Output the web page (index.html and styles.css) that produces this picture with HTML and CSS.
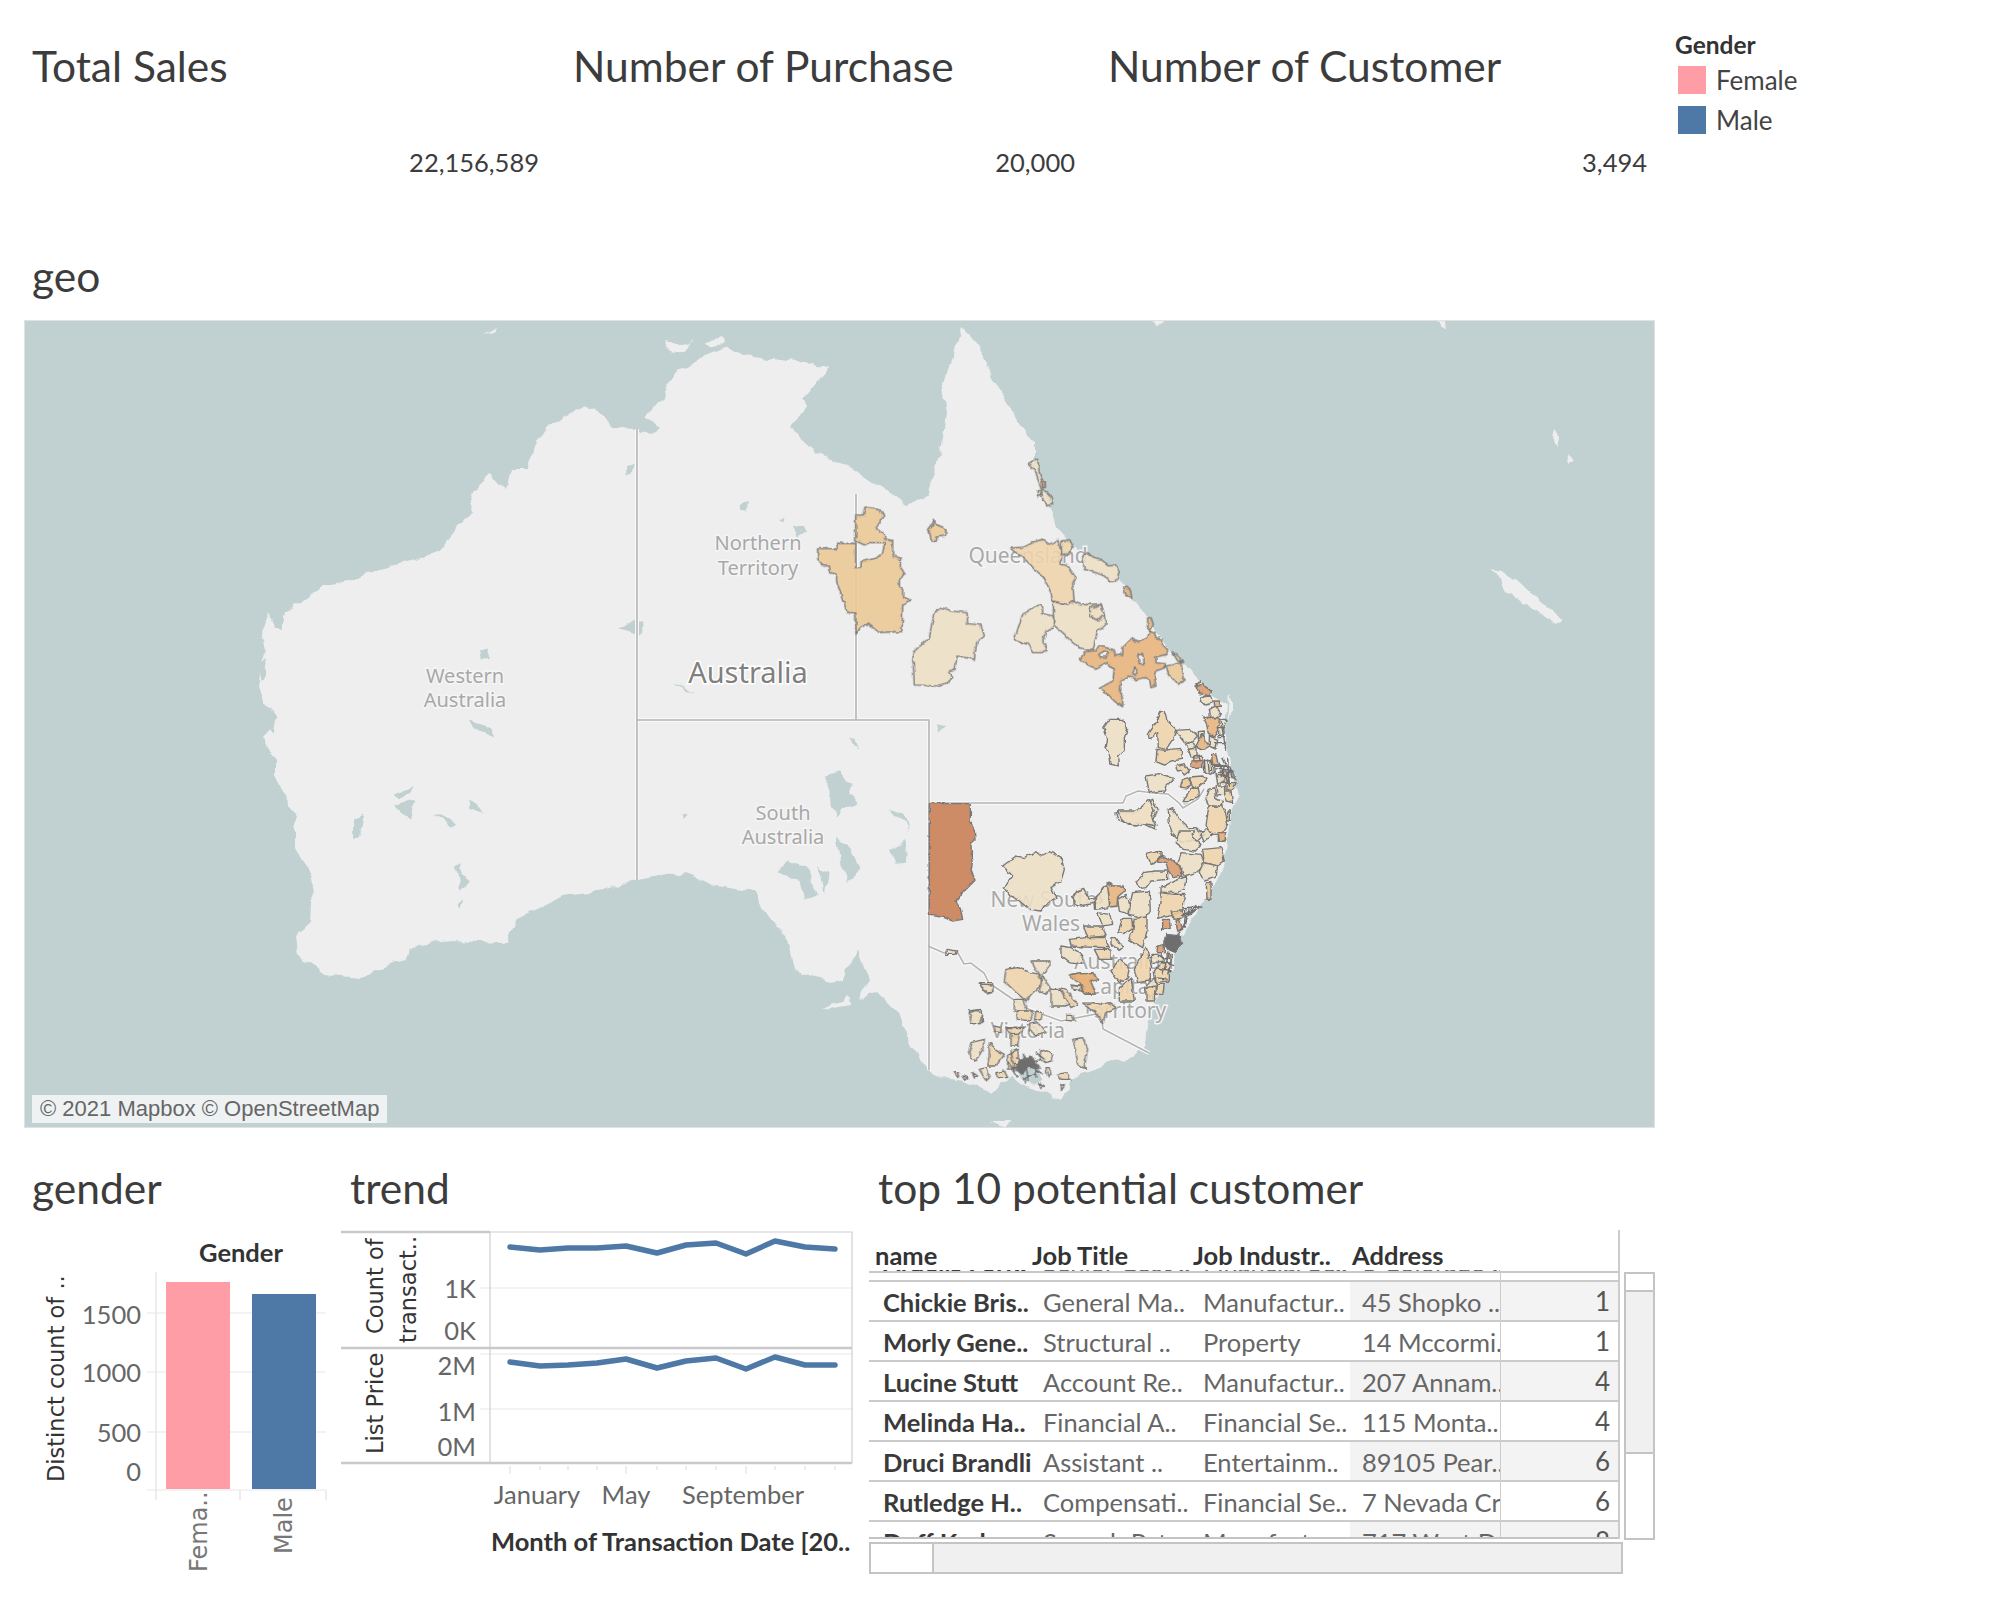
FILE: index.html
```html
<!DOCTYPE html>
<html lang="en">
<head>
<meta charset="utf-8">
<title>Customer dashboard</title>
<link rel="stylesheet" href="styles.css">
</head>
<body>
<main class="dash">
  <section class="kpis">
    <div class="kpi kpi-a"><h2 class="title">Total Sales</h2><div class="kpi-val">22,156,589</div></div>
    <div class="kpi kpi-b"><h2 class="title">Number of Purchase</h2><div class="kpi-val">20,000</div></div>
    <div class="kpi kpi-c"><h2 class="title">Number of Customer</h2><div class="kpi-val">3,494</div></div>
    <aside class="legend">
      <div class="legend-h">Gender</div>
      <div class="legend-i"><span class="sw sw-f"></span>Female</div>
      <div class="legend-i"><span class="sw sw-m"></span>Male</div>
    </aside>
  </section>

  <section class="geo">
    <h2 class="title geo-title">geo</h2>
    <div class="map">
      <svg class="map-svg" viewBox="24 320 1629 806" preserveAspectRatio="none" role="img" aria-label="Map of Australia">
        <defs>
          <filter id="roughLand" x="-5%" y="-5%" width="110%" height="110%">
            <feTurbulence type="fractalNoise" baseFrequency="0.07" numOctaves="2" seed="4"/>
            <feDisplacementMap in="SourceGraphic" scale="9" xChannelSelector="R" yChannelSelector="G"/>
          </filter>
          <filter id="roughReg" x="-5%" y="-5%" width="110%" height="110%">
            <feTurbulence type="fractalNoise" baseFrequency="0.16" numOctaves="2" seed="9"/>
            <feDisplacementMap in="SourceGraphic" scale="4" xChannelSelector="R" yChannelSelector="G"/>
          </filter>
        </defs>
        <rect class="sea" x="24" y="320" width="1629" height="806"/>
        <g class="rough-land">
          <path class="land" d="M927,1069 L909,1044 899,1014 876,991 858,999 868,978 856,950 840,978 830,982 802,973 794,970 787,937 764,914 754,891 710,884 685,871 634,879 603,889 565,894 516,917 506,942 450,940 409,945 402,958 358,977 322,973 297,955 294,935 310,922 312,881 294,846 294,815 274,774 274,759 261,736 277,718 264,700 256,677 266,647 261,631 269,611 272,626 281,629 284,611 302,601 320,585 348,580 366,573 389,565 440,550 455,527 473,511 468,493 488,471 506,491 511,468 527,468 532,448 547,425 562,417 583,404 595,407 613,427 636,428 649,435 659,427 644,417 662,397 674,371 697,358 726,346 751,356 797,361 828,366 812,386 802,397 807,404 789,427 817,453 848,465 879,486 907,503 925,496 940,453 945,412 940,381 950,366 960,325 975,340 990,375 1005,400 1020,425 1033,440 1033,457 1048,503 1057,528 1067,540 1080,550 1117,570 1130,597 1145,613 1153,630 1183,663 1195,680 1225,703 1223,733 1233,773 1237,793 1230,813 1222,867 1208,893 1195,913 1180,937 1170,967 1160,987 1147,1023 1145,1043 1133,1057 1113,1060 1087,1070 1070,1082 1060,1100 1048,1093 1032,1088 1013,1077 1000,1082 990,1092 963,1080 940,1077 Z"/>
          <g class="land">
            <polygon points="1492,568 1505,571 1526,590 1563,620 1556,623 1530,606 1505,590"/>
            <polygon points="1552,428 1558,436 1556,446 1550,438"/>
            <polygon points="1566,452 1574,460 1568,462"/>
            <polygon points="1150,320 1168,320 1156,325"/>
            <polygon points="1432,320 1444,320 1446,328 1440,326"/>
            <polygon points="484,332 496,324 491,330"/>
            <polygon points="990,1122 1012,1122 1004,1128"/>
            <polygon points="820,1006 842,1001 846,996 848,1004 826,1008"/>
            <polygon points="662,340 688,344 694,338 684,352 668,350"/>
            <polygon points="706,340 720,336 722,344 710,346"/>
            <polygon points="1226,706 1228,694 1232,704 1228,720"/>
          </g>
          <g class="lakes" transform="translate(200,320) scale(.5102)">
            <polygon points="1228,890 1250,882 1262,900 1280,905 1270,925 1285,945 1262,955 1245,972 1240,955 1228,925"/>
            <polygon points="1245,1010 1270,1035 1290,1075 1270,1105 1255,1060"/>
            <polygon points="1130,1085 1155,1055 1190,1075 1205,1125 1185,1130 1170,1095"/>
            <polygon points="1210,1070 1232,1080 1220,1120 1215,1095"/>
            <polygon points="1355,1040 1382,1015 1380,1060 1360,1062"/>
            <polygon points="1350,955 1375,965 1388,1005 1378,985"/>
            <polygon points="820,605 850,585 865,590 865,610 845,612"/>
            <polygon points="547,645 566,640 566,660 550,662"/>
            <polygon points="525,785 570,798 572,812 530,795"/>
            <polygon points="380,925 418,910 412,925 385,935"/>
            <polygon points="380,950 420,940 412,975 395,965"/>
            <polygon points="300,975 318,968 308,1015 300,1015"/>
            <polygon points="452,967 480,970 500,985 490,995 475,975"/>
            <polygon points="525,938 540,945 555,968 530,955"/>
            <polygon points="500,1070 515,1065 510,1085 525,1095 508,1120 505,1095"/>
            <polygon points="505,1140 516,1138 512,1152"/>
            <polygon points="943,965 955,968 948,976"/>
            <polygon points="1060,358 1072,355 1070,372 1060,370"/>
            <polygon points="1133,388 1146,385 1142,395"/>
            <polygon points="1160,400 1178,400 1188,415 1170,425"/>
            <polygon points="833,282 848,278 844,302 834,300"/>
            <polygon points="930,712 968,728 945,725"/>
            <polygon points="1265,815 1280,820 1290,840 1278,832"/>
            <polygon points="1442,795 1458,792 1448,808"/>
            <polygon points="1210,165 1232,168 1232,184 1212,184"/>
            <polygon points="112,675 132,660 122,702 114,705"/>
            <polygon points="88,760 98,780 92,790"/>
            <polygon points="112,765 148,780 142,808 125,795"/>
            <polygon points="1344,292 1362,295 1346,306"/>
            <polygon points="1240,960 1260,955 1244,972"/>
          </g>
          <g class="lakes" transform="translate(950,960) scale(.33333)">
            <polygon points="205,335 232,318 262,325 268,350 240,368 218,352"/>
          </g>
        </g>
        <g class="map-lbl">
          <text x="757" y="549">Northern</text>
          <text x="757" y="574">Territory</text>
          <text x="464" y="682">Western</text>
          <text x="464" y="706">Australia</text>
          <text x="782" y="819">South</text>
          <text x="782" y="843">Australia</text>
          <text class="map-big" x="747" y="682">Australia</text>
          <text class="map-mid" x="1027" y="562">Queensland</text>
          <text class="map-mid" x="1043" y="906">New South</text>
          <text class="map-mid" x="1050" y="930">Wales</text>
          <text class="map-mid" x="1123" y="968">Australian</text>
          <text class="map-mid" x="1120" y="993">Capital</text>
          <text class="map-mid" x="1123" y="1017">Territory</text>
          <text class="map-mid" x="1027" y="1037">Victoria</text>
        </g>
        <g class="border">
          <path d="M636,428 V879 M636,719 H928 V1069 M855,493 V719 M928,802 H1122 L1125,795 1137,790 1153,792 1167,793 1178,802 1182,807 1197,798 1203,788"/>
          <path d="M927,945 L943,952 957,952 963,963 970,962 983,972 988,982 1010,997 1027,1008 1060,1020 1100,1012 1100,1013 1102,1028 1148,1052"/>
        </g>
        <g class="border-in">
          <path d="M636,428 V879 M636,719 H928 V1069 M855,493 V719 M928,802 H1122 L1125,795 1137,790 1153,792 1167,793 1178,802 1182,807 1197,798 1203,788"/>
          <path d="M927,945 L943,952 957,952 963,963 970,962 983,972 988,982 1010,997 1027,1008 1060,1020 1100,1012 1100,1013 1102,1028 1148,1052"/>
        </g>
        <g class="rough-reg">
        <g class="regs" transform="translate(900,780) scale(.33333)">
          <polygon class="r6" points="85,68 208,68 208,120 220,150 222,175 210,185 212,235 214,245 210,265 222,298 205,315 180,340 165,360 178,380 185,415 155,420 130,410 85,403"/>
          <polygon class="r1" points="305,255 345,225 370,230 405,212 420,225 445,212 480,230 490,265 480,300 450,320 465,350 430,375 420,390 385,385 355,360 330,345 310,320 335,285"/>
          <polygon class="r1" points="645,95 705,95 735,65 755,55 770,90 755,115 765,145 720,125 685,130 650,115"/>
          <polygon class="r1" points="135,505 170,510 165,520 135,520"/>
          <polygon class="r2" points="235,605 275,605 275,635 255,640"/>
          <polygon class="r1" points="205,690 240,685 245,725 215,725"/>
        </g>
        <g class="regs" transform="translate(800,440) scale(.33333)">
          <polygon class="r3" points="50,323 108,323 108,307 164,307 164,380 180,378 180,362 225,352 245,335 252,305 205,305 190,312 164,300 164,222 187,222 192,198 240,208 248,225 225,262 250,280 252,295 275,298 275,345 298,350 298,378 312,400 295,415 295,435 308,445 308,470 328,478 305,490 303,572 235,574 200,548 178,560 165,580 164,515 138,515 108,425 105,400 88,395 85,375 65,375 50,350"/>
          <polygon class="r3" points="400,235 405,250 435,263 433,285 408,288 405,302 390,298 388,285 383,265 395,250"/>
          <polygon class="r1" points="422,500 450,510 498,515 500,548 540,552 550,585 527,605 520,655 468,645 462,685 445,690 455,710 440,725 405,735 340,732 335,635 385,590 392,550 402,515"/>
          <polygon class="r2" points="725,295 745,310 770,295 782,345 780,370 800,375 825,410 815,430 820,485 800,490 755,480 750,455 725,405 700,385 675,355 625,322 670,318 700,302"/>
          <polygon class="r1" points="757,482 800,490 815,480 840,492 865,490 900,488 908,515 915,550 890,570 875,630 835,620 815,605 785,575 757,552"/>
          <polygon class="r1" points="868,500 900,490 910,520 890,540 868,525"/>
          <polygon class="r1" points="712,492 725,498 725,518 757,525 757,560 735,570 725,600 738,625 722,635 695,635 680,610 640,595 655,550 665,520 690,505"/>
          <polygon class="r4" points="965,620 995,590 1010,605 1040,590 1045,572 1060,575 1065,590 1085,595 1085,615 1100,625 1098,640 1065,648 1065,665 1092,668 1092,680 1065,690 1060,705 1065,735 1050,740 1045,715 1030,710 1005,717 985,705 960,718 955,745 965,770 965,797 945,785 925,765 895,742 935,720 940,685 920,665 885,685 855,668 838,655 850,632 885,628 893,615 935,625 945,645 965,640"/>
          <polygon class="hole" points="893,640 910,630 925,635 915,648 898,648"/>
          <polygon class="hole" points="1010,642 1025,640 1030,668 1015,668"/>
          <polygon class="hole" points="995,695 1005,680 1008,695 1000,702"/>
          <polygon class="r1" points="845,345 860,335 880,350 900,355 925,375 945,372 955,395 945,420 925,422 910,405 885,395 850,385"/>
          <polygon class="r1" points="680,68 710,55 715,95 730,125 725,145 750,165 755,190 740,195 725,175 722,150 705,95"/>
          <polygon class="r1" points="708,150 718,148 720,162 710,165"/>
          <polygon class="r5" points="722,120 733,120 733,140 724,140"/>
          <polygon class="r2" points="780,300 805,296 815,310 805,340 782,340"/>
          <polygon class="r4" points="968,435 980,440 990,455 992,470 975,465"/>
          <polygon class="r4" points="1040,530 1050,530 1057,550 1048,572 1040,555"/>
          <polygon class="r3" points="1095,675 1140,665 1150,715 1135,730 1105,705"/>
          <polygon class="r3" points="1115,635 1130,640 1145,665 1130,660"/>
        </g>
        <g class="regs" transform="translate(1080,670) scale(.33333)">
          <polygon class="r5" points="345,45 365,40 392,62 385,75 355,68"/>
          <polygon class="r4" points="347,35 358,32 358,44 350,44"/>
          <polygon class="r1" points="362,78 390,75 395,95 375,102 358,92"/>
          <polygon class="r4" points="398,90 415,90 418,106 402,108"/>
          <polygon class="r1" points="382,115 405,105 418,125 410,140 385,138"/>
          <polygon class="r4" points="365,138 418,142 412,175 398,198 382,190 378,165"/>
          <polygon class="r1" points="415,145 435,145 428,170 430,200 412,200"/>
          <polygon class="r2" points="240,118 250,122 258,148 285,175 275,205 255,235 232,230 230,185 205,205 202,190 228,150"/>
          <polygon class="r1" points="68,170 85,145 125,145 140,175 130,200 130,235 110,255 112,285 90,280 85,250 75,230 80,205"/>
          <polygon class="r1" points="285,178 330,175 350,195 335,210 310,215 295,195"/>
          <polygon class="r1" points="352,182 370,180 368,200 352,205"/>
          <polygon class="r4" points="362,188 370,205 385,225 365,238 345,228 350,215"/>
          <polygon class="r1" points="385,195 410,205 405,235 385,225"/>
          <polygon class="r1" points="312,215 335,212 345,230 322,235"/>
          <polygon class="r2" points="228,235 250,238 268,235 300,232 305,265 270,270 250,282 225,272"/>
          <polygon class="r1" points="322,235 345,232 345,255 330,258"/>
          <polygon class="r2" points="282,285 310,278 325,300 310,312 300,298 290,300"/>
          <polygon class="r2" points="338,258 365,255 362,270 338,272"/>
          <polygon class="r5" points="330,270 365,268 365,288 330,290"/>
          <polygon class="r1" points="370,268 395,270 400,300 385,310 370,300"/>
          <polygon class="r4" points="392,250 405,252 412,282 395,282"/>
          <polygon class="r1" points="195,315 235,308 280,322 255,345 250,360 205,365"/>
          <polygon class="r3" points="305,325 322,320 330,340 320,352 298,348"/>
          <polygon class="r2" points="325,318 365,315 378,325 355,345 335,350"/>
          <polygon class="r2" points="330,352 352,352 355,372 335,385 320,395 305,395 318,370"/>
          <polygon class="r1" points="110,420 160,420 185,405 205,385 220,420 210,435 225,465 190,458 165,465 125,450"/>
          <polygon class="r1" points="262,415 275,410 290,440 310,460 322,470 345,470 370,490 350,510 295,510 275,490 265,460"/>
          <polygon class="r2" points="385,405 425,405 435,430 440,460 420,490 395,490 375,465 380,430"/>
          <polygon class="r1" points="405,345 430,345 432,370 408,372"/>
          <polygon class="r2" points="430,360 450,360 455,395 435,390"/>
          <polygon class="r3" points="435,335 465,335 455,358 435,355"/>
          <polygon class="r1" points="385,355 400,350 405,385 425,390 420,405 385,405 375,385"/>
          <polygon class="r4" points="412,485 430,485 435,510 412,510"/>
          <polygon class="r2" points="440,420 448,420 448,450 440,450"/>
          <polygon class="r1" points="360,490 378,470 395,490 370,510"/>
          <polygon class="r4" points="418,300 435,300 445,335 425,335"/>
          <polygon class="r1" points="405,305 425,305 430,330 410,340"/>
          <path class="scrib" d="M395,282 L445,285 L465,330 M425,260 L455,320 M400,290 L460,300 M415,275 L440,335 M430,285 L420,320 M445,295 L430,325 M410,310 L462,322 M440,260 L445,345 M420,150 L435,240 M410,170 L432,170 M405,195 L432,190 M402,215 L435,215 M370,265 L372,305 M380,265 L385,305 M390,265 L392,300 M355,270 L350,255"/>
        </g>
        <g class="regs" transform="translate(1060,830) scale(.33333)">
          <polygon class="r1" points="355,0 400,0 395,20 420,40 400,60 370,55 345,35"/>
          <polygon class="r2" points="425,55 480,50 490,90 470,105 430,95"/>
          <polygon class="r1" points="360,65 420,70 435,100 405,125 370,135 350,100"/>
          <polygon class="r4" points="472,5 495,5 492,30 475,30"/>
          <polygon class="r2" points="255,70 300,60 300,80 275,100 265,95"/>
          <polygon class="r1" points="250,125 280,120 320,120 320,145 270,150 255,170 240,172 225,155"/>
          <polygon class="r5" points="300,75 335,88 362,110 362,135 335,140 320,115 315,95 290,90"/>
          <polygon class="r1" points="425,95 470,105 465,140 430,150 415,125"/>
          <polygon class="r1" points="300,170 340,150 375,135 370,175 345,185 300,180"/>
          <polygon class="r3" points="436,155 450,155 450,205 438,205"/>
          <polygon class="r1" points="48,180 68,172 85,205 120,195 120,215 50,225 35,200"/>
          <polygon class="r1" points="125,170 145,160 145,230 100,235 100,215"/>
          <polygon class="r4" points="138,155 158,165 190,165 190,180 170,198 168,225 148,228"/>
          <polygon class="r1" points="170,205 195,190 205,215 205,250 175,240"/>
          <polygon class="r1" points="215,185 265,180 268,240 255,262 205,250 208,215"/>
          <polygon class="r2" points="295,185 340,190 370,190 365,245 310,255 290,262 300,215"/>
          <polygon class="r3" points="330,240 365,240 370,260 340,265"/>
          <polygon class="r5" points="305,265 325,265 328,295 305,295"/>
          <polygon class="r5" points="345,270 355,265 365,295 350,300"/>
          <polygon class="r2" points="185,262 212,262 215,290 190,308 170,305"/>
          <polygon class="r2" points="220,262 258,258 258,300 245,350 205,325 215,300"/>
          <polygon class="r1" points="110,245 145,250 155,280 125,285"/>
          <polygon class="r2" points="68,285 125,285 135,315 80,320"/>
          <polygon class="r2" points="75,320 130,320 145,350 70,348 30,345 25,325"/>
          <polygon class="r1" points="150,320 165,320 185,350 175,358 150,340"/>
          <polygon class="r1" points="0,345 30,350 65,370 60,400 25,395 0,375"/>
          <polygon class="r2" points="100,355 150,355 150,385 115,385"/>
          <polygon class="r2" points="175,385 205,410 200,440 175,455 150,420"/>
          <polygon class="r2" points="255,345 268,395 268,450 230,455 220,415 240,375"/>
          <polygon class="r4" points="30,430 60,425 95,425 105,440 85,450 100,475 105,490 75,490 60,470 45,440"/>
          <polygon class="r1" points="35,465 60,465 65,480 40,478"/>
          <polygon class="r2" points="300,395 325,395 325,450 285,455 280,420"/>
          <polygon class="r1" points="270,370 300,370 310,390 275,395"/>
          <polygon class="r5" points="290,345 310,340 310,365 288,365"/>
          <polygon class="r5" points="318,365 330,370 325,385 318,382"/>
          <polygon class="r1" points="250,470 280,440 290,480 265,500"/>
          <polygon class="r2" points="175,470 210,440 220,510 175,510"/>
          <polygon class="r2" points="290,460 310,460 305,490 285,490"/>
          <polygon class="r2" points="255,470 282,465 280,510 255,510"/>
          <polygon class="dense" points="315,310 355,315 362,340 345,365 320,355 308,335"/>
          <path class="scrib" d="M365,230 L425,228 M375,228 L370,290 M385,228 L375,270 M395,225 L365,290 M405,222 L385,255 M415,225 L395,245 M360,255 L395,240 M365,290 L340,320 M300,395 L340,400 M325,365 L305,430 M335,370 L320,430 M285,410 L335,420 M285,440 L320,445 M290,375 L320,385"/>
        </g>
        <g class="regs" transform="translate(950,960) scale(.33333)">
          <polygon class="r2" points="165,25 200,20 240,35 265,40 275,70 245,95 225,120 190,90 160,60"/>
          <polygon class="r1" points="275,45 300,85 285,100 265,90"/>
          <polygon class="r1" points="300,85 325,85 365,125 340,135 300,135"/>
          <polygon class="r1" points="240,0 300,0 285,30 265,45"/>
          <polygon class="r4" points="355,42 390,35 425,35 440,55 420,62 435,100 400,95 395,75 370,55"/>
          <polygon class="r1" points="360,72 390,78 385,88 365,85"/>
          <polygon class="r1" points="55,155 80,148 95,165 85,185 60,185"/>
          <polygon class="r1" points="105,70 125,72 125,95 108,95 85,70"/>
          <polygon class="r2" points="325,80 345,85 380,130 360,140 345,115"/>
          <polygon class="r2" points="395,130 430,125 450,130 475,125 495,140 465,155 455,185 430,150"/>
          <polygon class="r1" points="190,115 215,115 230,150 190,150"/>
          <polygon class="r2" points="195,150 245,150 240,180 200,175"/>
          <polygon class="r2" points="255,150 275,155 270,175 250,180"/>
          <polygon class="r1" points="230,190 260,185 285,215 250,225"/>
          <polygon class="r2" points="165,200 220,200 200,225 175,215"/>
          <polygon class="r2" points="130,195 150,200 150,215 130,212"/>
          <polygon class="r2" points="180,220 205,220 200,255 180,255"/>
          <polygon class="r1" points="60,245 100,235 95,265 75,300 60,290 55,265"/>
          <polygon class="r2" points="115,245 135,265 160,280 135,315 110,315 115,280"/>
          <polygon class="r1" points="365,235 395,230 410,265 400,315 405,325 380,310 375,275"/>
          <polygon class="r1" points="345,160 365,160 370,180 345,178"/>
          <polygon class="r1" points="85,325 105,320 115,350 105,360"/>
          <polygon class="r2" points="135,335 160,330 170,350 140,350"/>
          <polygon class="r2" points="170,280 200,265 205,320 170,325"/>
          <polygon class="r1" points="270,265 305,280 300,300 285,305 265,295"/>
          <polygon class="r2" points="320,340 345,335 360,355 330,355"/>
          <polygon class="r1" points="285,320 295,320 300,340 290,345"/>
          <polygon class="r2" points="10,335 25,335 20,350"/>
          <polygon class="r2" points="35,345 50,350 40,358"/>
          <polygon class="r1" points="65,335 80,345 70,348"/>
          <polygon class="r1" points="330,370 340,375 332,388"/>
          <polygon class="r1" points="265,365 280,375 270,380"/>
          <polygon class="dense" points="205,295 240,285 265,320 232,318 212,340 195,325"/>
          <path class="scrib" d="M195,290 L275,340 M205,330 L265,295 M220,280 L232,360 M250,290 L255,350 M190,310 L270,325 M218,355 L262,330 M215,350 L225,365 M170,300 L200,350 M180,265 L190,330 M255,275 L280,295"/>
        </g>
        </g>
      </svg>
      <div class="map-credit">© 2021 Mapbox © OpenStreetMap</div>
    </div>
  </section>

  <section class="bottom">
    <div class="panel panel-gender">
      <h2 class="title panel-title">gender</h2>
      <svg class="chart chart-g" viewBox="24 1230 317 370" role="img" aria-label="Bars by gender">
        <path class="grid" d="M147,1313 H326 M147,1372 H326 M147,1432 H326 M147,1490 H326"/>
        <path class="grid-v" d="M156,1272 V1500 M240,1490 V1500 M326,1490 V1500"/>
        <rect class="bar-f" x="166" y="1282" width="64" height="207"/>
        <rect class="bar-m" x="252" y="1294" width="64" height="195"/>
        <text class="hdr" x="241" y="1262" text-anchor="middle">Gender</text>
        <g class="tick" text-anchor="end">
          <text x="141" y="1324">1500</text>
          <text x="141" y="1382">1000</text>
          <text x="141" y="1442">500</text>
          <text x="141" y="1481">0</text>
        </g>
        <text class="rot rot-dark" transform="translate(64,1482) rotate(-90)">Distinct count of ..</text>
        <text class="rot rot-grey" transform="translate(207,1572) rotate(-90)">Fema..</text>
        <text class="rot rot-grey" transform="translate(292,1554) rotate(-90)">Male</text>
      </svg>
    </div>

    <div class="panel panel-trend">
      <h2 class="title panel-title">trend</h2>
      <svg class="chart chart-t" viewBox="341 1230 528 370" role="img" aria-label="Monthly trend">
        <path class="grid" d="M480,1288 H852 M480,1354 H852 M480,1409 H852"/>
        <path class="frame-thin" d="M490,1232 H852 V1463 M490,1232 V1463"/>
        <path class="frame" d="M341,1232 H490 M341,1348 H852 M341,1463 H852"/>
        <path class="grid-v" d="M510,1466 V1474 M540,1466 V1470 M568,1466 V1470 M597,1466 V1470 M626,1466 V1474 M657,1466 V1470 M686,1466 V1470 M716,1466 V1470 M746,1466 V1474 M775,1466 V1470 M805,1466 V1470 M835,1466 V1470"/>
        <polyline class="line" points="510,1247 540,1250 568,1248 597,1248 626,1246 657,1253 686,1245 716,1243 746,1254 775,1241 805,1247 835,1249"/>
        <polyline class="line" points="510,1362 540,1366 568,1365 597,1363 626,1359 657,1368 686,1361 716,1358 746,1369 775,1357 805,1365 835,1365"/>
        <g class="tick" text-anchor="end">
          <text x="476" y="1298">1K</text>
          <text x="476" y="1340">0K</text>
          <text x="476" y="1375">2M</text>
          <text x="476" y="1421">1M</text>
          <text x="476" y="1456">0M</text>
        </g>
        <g class="tick" text-anchor="middle">
          <text x="537" y="1504">January</text>
          <text x="626" y="1504">May</text>
          <text x="743" y="1504">September</text>
        </g>
        <text class="hdr" x="491" y="1551">Month of Transaction Date [20..</text>
        <text class="rot rot-dark" transform="translate(383,1334) rotate(-90)">Count of</text>
        <text class="rot rot-dark" transform="translate(416,1343) rotate(-90)">transact..</text>
        <text class="rot rot-dark" transform="translate(383,1454) rotate(-90)">List Price</text>
      </svg>
    </div>

    <div class="panel panel-table">
      <h2 class="title panel-title">top 10 potential customer</h2>
      <div class="tbl-wrap">
        <div class="tbl">
          <div class="thead">
            <span class="th th-a">name</span>
            <span class="th th-b">Job Title</span>
            <span class="th th-c">Job Industr..</span>
            <span class="th">Address</span>
          </div>
          <div class="tbody">
            <div class="row row-first"><span class="c-name">Ardelis Forr..</span><span class="c">Senior Cost ..</span><span class="c">Financial Se..</span><span class="c c-addr">3 Colorado ..</span><span class="c-num"></span></div>
            <div class="row band"><span class="c-name">Chickie Bris..</span><span class="c">General Ma..</span><span class="c">Manufactur..</span><span class="c c-addr">45 Shopko ..</span><span class="c-num">1</span></div>
            <div class="row"><span class="c-name">Morly Gene..</span><span class="c">Structural ..</span><span class="c">Property</span><span class="c c-addr">14 Mccormi..</span><span class="c-num">1</span></div>
            <div class="row band"><span class="c-name">Lucine Stutt</span><span class="c">Account Re..</span><span class="c">Manufactur..</span><span class="c c-addr">207 Annam..</span><span class="c-num">4</span></div>
            <div class="row"><span class="c-name">Melinda Ha..</span><span class="c">Financial A..</span><span class="c">Financial Se..</span><span class="c c-addr">115 Monta..</span><span class="c-num">4</span></div>
            <div class="row band"><span class="c-name">Druci Brandli</span><span class="c">Assistant ..</span><span class="c">Entertainm..</span><span class="c c-addr">89105 Pear..</span><span class="c-num">6</span></div>
            <div class="row"><span class="c-name">Rutledge H..</span><span class="c">Compensati..</span><span class="c">Financial Se..</span><span class="c c-addr">7 Nevada Cr..</span><span class="c-num">6</span></div>
            <div class="row band"><span class="c-name">Duff Karlow</span><span class="c">Speech Pat..</span><span class="c">Manufactur..</span><span class="c c-addr">717 West D..</span><span class="c-num">8</span></div>
          </div>
        </div>
        <div class="vscroll"><div class="vthumb"></div></div>
        <div class="hscroll"><div class="hthumb"></div></div>
      </div>
    </div>
  </section>
</main>
</body>
</html>
```
FILE: styles.css
```css
* { box-sizing: border-box; }
html, body { margin: 0; padding: 0; background: #fff; }
body { font-family: Lato, "Open Sans", sans-serif; color: #333; }
.dash { width: 2000px; height: 1600px; overflow: hidden; }
.title { margin: 0; font-weight: 400; font-size: 42.5px; line-height: 48px; color: #3c3c3c; padding-left: 8px; }

.kpis { display: flex; height: 240px; padding: 42px 0 0 24px; }
.kpi-a { width: 541px; }
.kpi-b { width: 535px; }
.kpi-c { width: 555px; }
.kpi-val { text-align: right; padding-right: 8px; margin-top: 59px; font-size: 25.5px; line-height: 26px; color: #3c3c3c; }
.kpi-a .kpi-val { padding-right: 26px; }
.kpi-b .kpi-val { padding-right: 25px; }

.legend { margin: -10px 0 0 20px; font-size: 26px; }
.legend-h { font-weight: 700; font-size: 24.5px; line-height: 26px; margin-bottom: 8px; color: #333; }
.legend-i { display: flex; align-items: center; height: 28px; margin: 0 0 12px 3px; gap: 10px; color: #444; }
.sw { width: 28px; height: 28px; }
.sw-f { background: #ff9da7; }
.sw-m { background: #4e79a7; }

.geo { height: 888px; }
.geo-title { height: 80px; padding-left: 32px; padding-top: 12px; }
.map { position: relative; margin-left: 24px; width: 1631px; height: 808px; border: 1px solid #e2e2e2; }
.map-svg { display: block; width: 100%; height: 100%; }
.sea { fill: #c1d1d2; }
.land { fill: #eeeeee; }
.lakes { fill: #c1d1d2; }
.rough-land { filter: url(#roughLand); }
.rough-reg { filter: url(#roughReg); }
.border path { fill: none; stroke: #f8f8f8; stroke-width: 4; }
.border-in path { fill: none; stroke: #b4b4b4; stroke-width: 1.6; }
.map-lbl text { font-family: "Noto Sans", sans-serif; font-size: 20px; fill: #a8a8a8; text-anchor: middle; stroke: #f5f5f5; stroke-width: 3px; paint-order: stroke; }
.map-lbl .map-big { font-size: 29px; fill: #808080; stroke: #fff; }
.map-lbl .map-mid { font-size: 21px; }
.regs polygon { stroke: #787878; stroke-width: 1.4px; vector-effect: non-scaling-stroke; fill-opacity: .88; stroke-linejoin: round; }
.regs .r1 { fill: #eedfc5; }
.regs .r2 { fill: #f0d4ac; }
.regs .r3 { fill: #ebc895; }
.regs .r4 { fill: #e8b47c; }
.regs .r5 { fill: #dc9a6c; }
.regs .r6 { fill: #cd8b66; fill-opacity: 1; }
.regs .hole { fill: #eeeeee; fill-opacity: 1; }
.regs .dense { fill: #6e6e6e; fill-opacity: 1; }
.scrib { fill: none; stroke: #6e6e6e; stroke-width: 1.4px; vector-effect: non-scaling-stroke; }
.map-credit { position: absolute; left: 7px; bottom: 4px; padding: 0 8px; height: 28px; line-height: 28px; background: rgba(255,255,255,.72); font-family: "Liberation Sans", Arial, sans-serif; font-size: 22px; color: #666; }

.bottom { display: flex; height: 472px; }
.panel-gender { width: 341px; padding-left: 24px; }
.panel-trend { width: 528px; }
.panel-table { width: 800px; }
.panel-title { height: 102px; padding-top: 36px; line-height: 48px; }
.panel-trend .panel-title { padding-left: 9px; }
.panel-table .panel-title { padding-left: 9px; }
.chart { display: block; }
.chart-g { width: 317px; height: 370px; }
.chart-t { width: 528px; height: 370px; }
.chart text { font-family: Lato, sans-serif; }
.grid { fill: none; stroke: #f3f3f3; stroke-width: 2; }
.grid-v { fill: none; stroke: #e8e8e8; stroke-width: 1.5; }
.frame { fill: none; stroke: #c9c9c9; stroke-width: 2.5; }
.frame-thin { fill: none; stroke: #cfcfcf; stroke-width: 1.2; }
.bar-f { fill: #ff9da7; }
.bar-m { fill: #4e79a7; }
.line { fill: none; stroke: #4e79a7; stroke-width: 5.5; stroke-linejoin: round; stroke-linecap: round; }
.chart .hdr { font-weight: 700; font-size: 25.5px; fill: #333; }
.tick text { font-size: 25.5px; fill: #666; }
.chart .rot { font-family: "DejaVu Sans", sans-serif; font-size: 22.5px; }
.chart .rot-grey { font-size: 24px; fill: #777; }
.rot-dark { fill: #333; }

.tbl-wrap { display: grid; grid-template-columns: 751px 35px; grid-template-rows: 309px 35px; }
.tbl { border-right: 2px solid #ccc; height: 309px; display: flex; flex-direction: column; position: relative; }
.thead { height: 40px; padding: 8px 0 0 6px; display: flex; font-weight: 700; font-size: 25.5px; line-height: 34px; color: #333; white-space: nowrap; }
.th-a { width: 157px; }
.th-b { width: 161px; }
.th-c { width: 159px; }
.tbody { height: 269px; overflow: hidden; border-bottom: 2px solid #c4c4c4; background: #fff; position: relative; }
.tbody::before { content: ""; position: absolute; z-index: 2; left: 0; right: 0; top: 1px; height: 2px; background: #c9c9c9; }
.tbody::after { content: ""; position: absolute; z-index: 2; left: 631px; top: 3px; bottom: 0; width: 1px; background: #ccc; }
.row { display: grid; grid-template-columns: 166px 160px 155px 150px 118px; height: 40px; border-bottom: 2.5px solid #cbcbcb; align-items: center; font-size: 25.5px; white-space: nowrap; }
.row-first { margin-top: -28px; }
.row > span { height: 100%; line-height: 40px; overflow: hidden; }
.c-name { padding-left: 14px; font-weight: 700; color: #3a3a3a; }
.c { padding-left: 8px; color: #666; }
.c-addr { padding-left: 12px; }
.row > .c-num { text-align: right; padding-right: 8px; font-size: 26px; line-height: 38px; color: #555; }
.band .c-addr, .band .c-num { background: #f3f3f3; }

.vscroll { margin: 42px 0 0 4px; width: 31px; height: 268px; border: 2px solid #c4c4c4; background: #fff; padding-top: 16px; }
.vthumb { height: 164px; background: #f0f0f0; border-top: 2px solid #c4c4c4; border-bottom: 2px solid #c4c4c4; }
.hscroll { grid-column: 1 / 3; margin-top: 3px; width: 754px; height: 32px; border: 2px solid #c4c4c4; background: #fff; padding-left: 61px; }
.hthumb { height: 100%; background: #f0f0f0; border-left: 2px solid #c4c4c4; }
```
